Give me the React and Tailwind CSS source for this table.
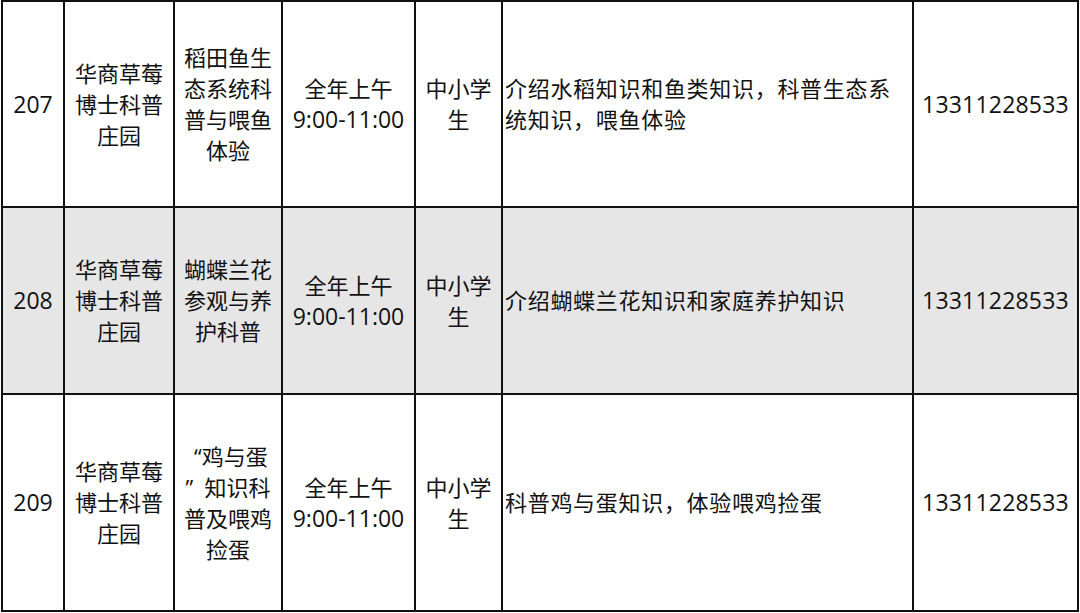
import React from "react";

const rows = [
  {
    id: "207",
    h: "h-[206px]",
    bg: "bg-white",
    org: ["华商草莓", "博士科普", "庄园"],
    act: ["稻田鱼生", "态系统科", "普与喂鱼", "体验"],
    desc: ["介绍水稻知识和鱼类知识，科普生态系", "统知识，喂鱼体验"],
  },
  {
    id: "208",
    h: "h-[187px]",
    bg: "bg-[#e6e6e6]",
    org: ["华商草莓", "博士科普", "庄园"],
    act: ["蝴蝶兰花", "参观与养", "护科普"],
    desc: ["介绍蝴蝶兰花知识和家庭养护知识"],
  },
  {
    id: "209",
    h: "h-[217px]",
    bg: "bg-white",
    org: ["华商草莓", "博士科普", "庄园"],
    act: ["\u00a0“鸡与蛋", "”\u00a0\u00a0知识科", "普及喂鸡", "捡蛋"],
    desc: ["科普鸡与蛋知识，体验喂鸡捡蛋"],
  },
];

function Lines({ items }) {
  return items.map((t, i) => (
    <React.Fragment key={i}>
      {t}
      {i < items.length - 1 && <br />}
    </React.Fragment>
  ));
}

export default function App() {
  const cell = "border-2 border-[#111] p-0 align-middle";
  return (
    <div className="w-[1080px] h-[613px] bg-white overflow-hidden pl-[1px]">
      <table
        className="border-collapse table-fixed w-[1078px] text-[22px] leading-[31px] text-[#111]"
        style={{ fontFamily: '"Open Sans", "Noto Sans CJK SC", sans-serif' }}
      >
        <colgroup>
          <col className="w-[62px]" />
          <col className="w-[110px]" />
          <col className="w-[108px]" />
          <col className="w-[133px]" />
          <col className="w-[87px]" />
          <col className="w-[411px]" />
          <col className="w-[165px]" />
        </colgroup>
        <tbody>
          {rows.map((r) => (
            <tr key={r.id} className={`${r.h} ${r.bg}`}>
              <td className={`${cell} text-center text-[23px]`}>{r.id}</td>
              <td className={`${cell} text-center whitespace-nowrap`}>
                <Lines items={r.org} />
              </td>
              <td className={`${cell} text-center whitespace-nowrap`}>
                <Lines items={r.act} />
              </td>
              <td className={`${cell} text-center whitespace-nowrap`}>
                全年上午
                <br />
                <span className="text-[23px]">9:00-11:00</span>
              </td>
              <td className={`${cell} text-center whitespace-nowrap`}>
                中小学
                <br />
                生
              </td>
              <td className={`${cell} text-left pl-[2px] whitespace-nowrap tracking-[0.7px]`}>
                <Lines items={r.desc} />
              </td>
              <td className={`${cell} text-center text-[23px] tracking-[0.2px]`}>13311228533</td>
            </tr>
          ))}
        </tbody>
      </table>
    </div>
  );
}
